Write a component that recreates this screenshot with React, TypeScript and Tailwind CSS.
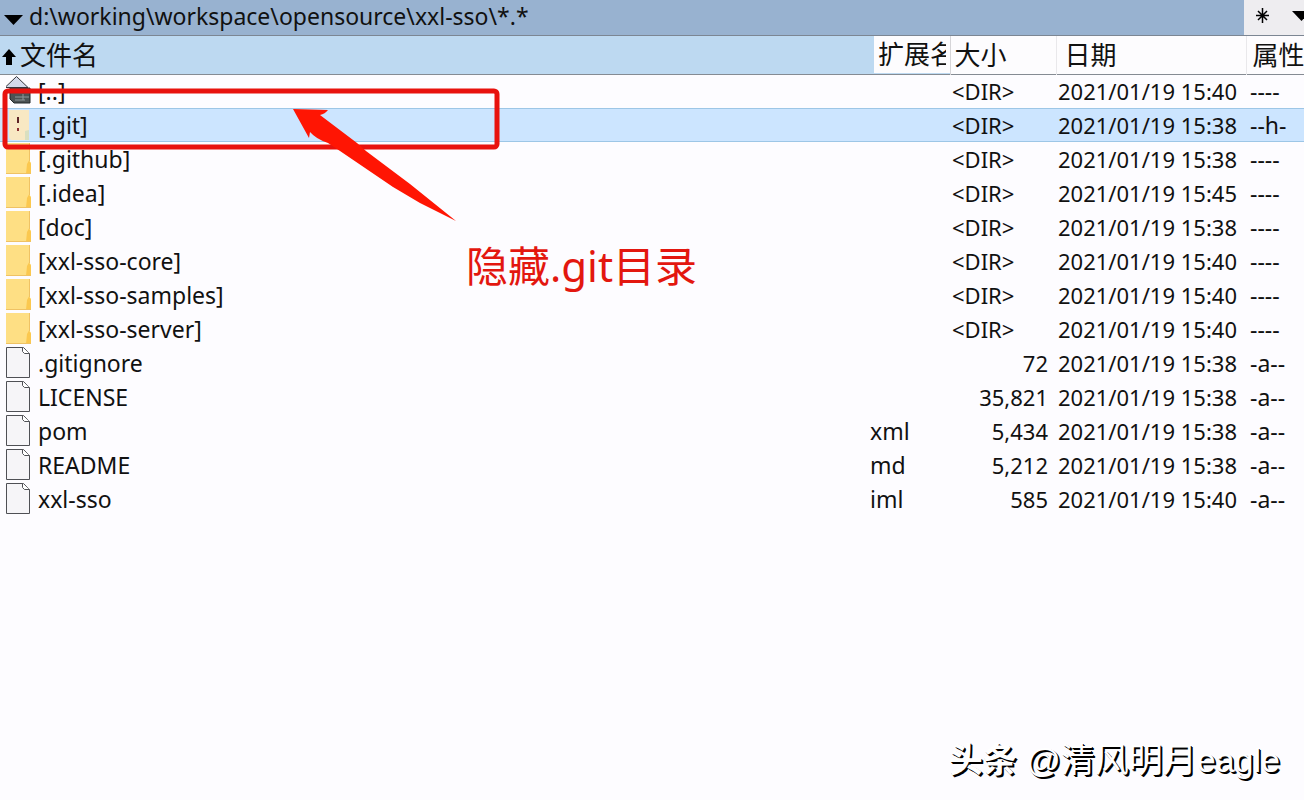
import { clsx } from 'clsx';

type Kind = 'up' | 'hidden' | 'folder' | 'file';

type Entry = {
  kind: Kind;
  name: string;
  ext?: string;
  size: string;
  date: string;
  attr: string;
};

const entries: Entry[] = [
  { kind: 'up', name: '[..]', size: '<DIR>', date: '2021/01/19 15:40', attr: '----' },
  { kind: 'hidden', name: '[.git]', size: '<DIR>', date: '2021/01/19 15:38', attr: '--h-' },
  { kind: 'folder', name: '[.github]', size: '<DIR>', date: '2021/01/19 15:38', attr: '----' },
  { kind: 'folder', name: '[.idea]', size: '<DIR>', date: '2021/01/19 15:45', attr: '----' },
  { kind: 'folder', name: '[doc]', size: '<DIR>', date: '2021/01/19 15:38', attr: '----' },
  { kind: 'folder', name: '[xxl-sso-core]', size: '<DIR>', date: '2021/01/19 15:40', attr: '----' },
  { kind: 'folder', name: '[xxl-sso-samples]', size: '<DIR>', date: '2021/01/19 15:40', attr: '----' },
  { kind: 'folder', name: '[xxl-sso-server]', size: '<DIR>', date: '2021/01/19 15:40', attr: '----' },
  { kind: 'file', name: '.gitignore', size: '72', date: '2021/01/19 15:38', attr: '-a--' },
  { kind: 'file', name: 'LICENSE', size: '35,821', date: '2021/01/19 15:38', attr: '-a--' },
  { kind: 'file', name: 'pom', ext: 'xml', size: '5,434', date: '2021/01/19 15:38', attr: '-a--' },
  { kind: 'file', name: 'README', ext: 'md', size: '5,212', date: '2021/01/19 15:38', attr: '-a--' },
  { kind: 'file', name: 'xxl-sso', ext: 'iml', size: '585', date: '2021/01/19 15:40', attr: '-a--' },
];

function EntryIcon({ kind }: { kind: Kind }) {
  return (
    <svg width="26" height="32" viewBox="0 0 26 32" className="shrink-0" aria-hidden="true">
      {kind === 'up' && (
        <>
          <path d="M4 13h20v15H8l-4-4z" fill="#4c5354" stroke="#22282a" />
          <path d="M9 22h14M9 25h10M17 19v6" stroke="#8e9899" />
          <path d="M-1 12.500 10.500 1.500 22 12.500z" fill="#d3d9ea" stroke="#34363d" />
        </>
      )}
      {kind === 'hidden' && (
        <>
          <path d="M3 1h20v30H5l-2-2z" fill="#f8e8c3" />
          <path d="M19 22l4-1v10h-4z" fill="#d9dfc0" />
          <path d="M12 8v6" stroke="#5d2527" strokeWidth="2" />
          <path d="M12 19v3" stroke="#8c3032" strokeWidth="2" />
        </>
      )}
      {kind === 'folder' && (
        <>
          <path d="M0 0h23v17l2 3v11H1l-1-1z" fill="#fedf84" />
          <path d="M23 17.500l2 3V31h-5l1-10z" fill="#fbc84f" />
          <path d="M0 30.500h25M23.500 0v18" stroke="#efc264" fill="none" />
        </>
      )}
      {kind === 'file' && (
        <>
          <path d="M.5 .5h17l6 6v24H.5z" fill="#f6f5f8" stroke="#4f5055" />
          <path d="M16.500 .5v4l2 2h5" fill="#fff" stroke="#4f5055" />
        </>
      )}
    </svg>
  );
}

function PathBar() {
  return (
    <header className="flex h-9 items-stretch border-b border-[#7c8693] bg-[#98b2d0]">
      <button type="button" className="flex min-w-0 flex-1 items-center gap-1.5 pb-1 pl-1 text-left">
        <svg width="19" height="10" viewBox="0 0 19 10" className="mt-2 shrink-0" aria-hidden="true">
          <path d="M0 0h19L9.500 10z" />
        </svg>
        <span className="text-[23px] whitespace-nowrap">d:\working\workspace\opensource\xxl-sso\*.*</span>
      </button>
      <div className="flex w-15 shrink-0 justify-between overflow-hidden bg-[#eeedf0]">
        <button type="button" aria-label="*" className="flex w-9 items-center justify-center pb-1">
          <svg width="15" height="15" viewBox="0 0 15 15" stroke="#000" strokeWidth="1.500" aria-hidden="true">
            <path d="M7.500 0v15M1 7.500h13M3 3l9 9M12 3l-9 9" />
          </svg>
        </button>
        <button type="button" aria-label="▼" className="flex w-3 items-center pb-1">
          <svg width="19" height="10" viewBox="0 0 19 10" className="shrink-0" aria-hidden="true">
            <path d="M0 0h19L9.500 10z" />
          </svg>
        </button>
      </div>
    </header>
  );
}

function FileTable() {
  return (
    <table className="w-full table-fixed border-collapse whitespace-nowrap">
      <colgroup>
        <col />
        <col className="w-[80px]" />
        <col className="w-[106px]" />
        <col className="w-[190px]" />
        <col className="w-[58px]" />
      </colgroup>
      <thead>
        <tr className="h-[38px] border-b border-[#858b93] bg-[#fdfcfe] text-left text-[26px] leading-8">
          <th scope="col" className="bg-[#bdd9f1] p-0 font-normal">
            <button type="button" className="flex items-center gap-1 pl-0.5">
              <svg width="14" height="16" viewBox="0 0 14 16" className="mt-1" aria-hidden="true">
                <path d="M7 0l7 8h-4v8H4V8H0z" />
              </svg>
              文件名
            </button>
          </th>
          <th scope="col" className="overflow-hidden bg-[#bdd9f1] p-0 pl-1 font-normal">
            {/* the column is narrower than its title, so the last character is clipped */}
            <button type="button" className="block w-full overflow-hidden bg-[#fdfcfe] pl-1 text-left leading-[37px]">
              <span className="block w-[68px] overflow-hidden">扩展名</span>
            </button>
          </th>
          <th scope="col" className="border-l border-[#d6d5d8] p-0 pl-1 font-normal">
            <button type="button">大小</button>
          </th>
          <th scope="col" className="border-l border-[#e9e8eb] p-0 pl-2 font-normal">
            <button type="button">日期</button>
          </th>
          <th scope="col" className="overflow-hidden border-l border-[#e9e8eb] p-0 pl-1.5 font-normal">
            <button type="button">属性</button>
          </th>
        </tr>
      </thead>
      <tbody>
        {entries.map((entry) => (
          <tr
            key={entry.name}
            className={clsx(
              'h-[34px]',
              entry.kind === 'hidden' && 'bg-[#cce5ff] shadow-[inset_0_1px_0_#9dc6e6,inset_0_-1px_0_#9dc6e6]'
            )}
          >
            <td className="p-0 text-[23px]">
              <div className="flex items-center gap-1.5 pl-1.5">
                <EntryIcon kind={entry.kind} />
                {entry.name}
              </div>
            </td>
            <td className="p-0 text-[23px]">{entry.ext}</td>
            <td className={clsx('p-0 pr-2', entry.size === '<DIR>' ? 'pl-0.5' : 'text-right')}>{entry.size}</td>
            <td className="p-0 pl-0.5">{entry.date}</td>
            <td className="p-0 pl-1 text-[23px]">{entry.attr}</td>
          </tr>
        ))}
      </tbody>
    </table>
  );
}

// red frame, arrow and caption drawn over the listing
function Annotation() {
  return (
    <div className="pointer-events-none absolute top-0 left-0">
      <svg width="720" height="300" viewBox="0 0 720 300" aria-hidden="true">
        <rect x="5" y="91" width="492" height="56" rx="3" fill="none" stroke="#e8120e" strokeWidth="5" />
        <path
          d="M293 109L328 110Q325 114 320 115L357 143L366 151L410 184L456 221L420 203L393 187L340 151L328 143Q316 139 310 132L309 138Z"
          fill="#ff1503"
        />
      </svg>
      <p className="absolute top-[240px] left-[466px] text-[42px] leading-[52px] whitespace-nowrap text-[#e3170f]">
        隐藏.git目录
      </p>
    </div>
  );
}

export default function App() {
  return (
    <div className="relative min-h-screen overflow-hidden bg-[#fdfcff] font-['Noto_Sans','Noto_Sans_CJK_SC',sans-serif] text-[22px] leading-7 text-[#111]">
      <PathBar />
      <FileTable />
      <Annotation />
      <p className="absolute right-6 bottom-4 font-['Liberation_Sans','Noto_Sans_CJK_SC',sans-serif] text-[34px] leading-12 text-white [text-shadow:1px_1px_0_#000,2px_2px_0_#000]">
        <span className="font-bold">头条</span> @清风明月eagle
      </p>
    </div>
  );
}
